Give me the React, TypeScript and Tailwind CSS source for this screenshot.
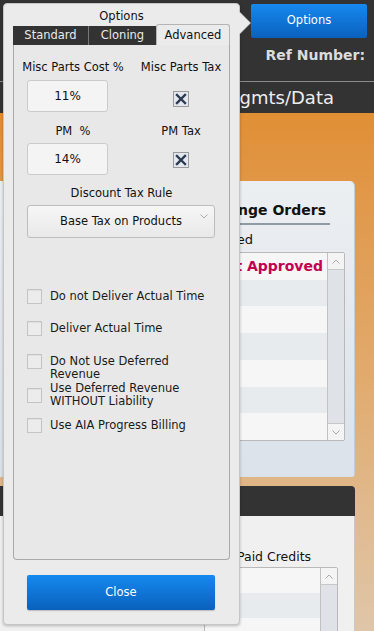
import React from "react";

const FONT = { fontFamily: '"DejaVu Sans", Verdana, sans-serif' };

function XBox() {
  return (
    <div className="w-[16px] h-[16px] border border-[#9a9a9a] bg-[#e4e8ee] flex items-center justify-center">
      <svg width="12" height="12" viewBox="0 0 12 12">
        <path d="M2 2 L10 10 M10 2 L2 10" stroke="#2b3a4f" strokeWidth="2.4" strokeLinecap="square" />
      </svg>
    </div>
  );
}

function CheckRow({ lines, className, center }: { lines: string[]; className?: string; center?: boolean }) {
  return (
    <div className={`flex ${center ? "items-center" : "items-start"} gap-[8px] ${className ?? ""}`}>
      <div className="w-[15px] h-[15px] shrink-0 border border-[#c4c4c4] bg-[#ececec] shadow-[inset_0_1px_1px_rgba(0,0,0,0.06)]" />
      <div className={`text-[11.5px] leading-[13px] text-[#1a1a1a] ${center ? "" : "mt-[1px]"}`}>
        {lines.map((l) => (
          <div key={l}>{l}</div>
        ))}
      </div>
    </div>
  );
}

function OptionsPopover() {
  return (
    <div className="absolute left-[3px] top-[3px] w-[237px] h-[622px] bg-[#ebebeb] border border-[#c6c6c6] rounded-[4px] shadow-[0_1px_3px_rgba(0,0,0,0.25)] flex flex-col">
      {/* arrow pointing at the Options button */}
      <div className="absolute right-[-12px] top-[7px] w-0 h-0 border-y-[12px] border-y-transparent border-l-[12px] border-l-[#c6c6c6]" />
      <div className="absolute right-[-11px] top-[7px] w-0 h-0 border-y-[12px] border-y-transparent border-l-[12px] border-l-[#ebebeb]" />

      <div className="h-[20px] pt-[5px] text-center text-[11.5px] leading-[14px] text-[#111]">Options</div>

      <div className="mx-[9px] flex items-end h-[21px]">
        <div className="w-[76px] h-[19px] bg-[#333] text-[#eaeaea] text-[11.5px] leading-[19px] text-center border-r border-[#777]">
          Standard
        </div>
        <div className="w-[67px] h-[19px] bg-[#333] text-[#eaeaea] text-[11.5px] leading-[19px] text-center">
          Cloning
        </div>
        <div className="flex-1 h-[21px] bg-[#ebebeb] border border-b-0 border-[#b4b4b4] rounded-t-[3px] text-[#111] text-[11.5px] leading-[20px] text-center">
          Advanced
        </div>
      </div>

      <div className="mx-[9px] h-[515px] bg-[#e8e8e8] border border-t-0 border-[#a9a9a9] rounded-b-[4px] pl-[8px] pt-[15px]">
        <div className="flex gap-[9px]">
          <div className="w-[102px]">
            <div className="text-center text-[11.5px] leading-[14px] text-[#111] whitespace-nowrap">Misc Parts Cost %</div>
            <div className="ml-[5px] mt-[6px] w-[81px] h-[32px] bg-[#f4f4f4] border border-[#cbcbcb] rounded-[3px] flex items-center justify-center text-[12px] text-[#111]">
              11%
            </div>
          </div>
          <div className="w-[96px] flex flex-col items-center">
            <div className="text-[11.5px] leading-[14px] text-[#111] whitespace-nowrap">Misc Parts Tax</div>
            <div className="mt-[17px]">
              <XBox />
            </div>
          </div>
        </div>

        <div className="flex gap-[9px] mt-[12px]">
          <div className="w-[102px]">
            <div className="text-center text-[11.5px] leading-[14px] text-[#111]">PM&nbsp; %</div>
            <div className="ml-[5px] mt-[5px] w-[81px] h-[32px] bg-[#f4f4f4] border border-[#cbcbcb] rounded-[3px] flex items-center justify-center text-[12px] text-[#111]">
              14%
            </div>
          </div>
          <div className="w-[96px] flex flex-col items-center">
            <div className="text-[11.5px] leading-[14px] text-[#111]">PM Tax</div>
            <div className="mt-[14px]">
              <XBox />
            </div>
          </div>
        </div>

        <div className="mt-[11px] pr-[8px] text-center text-[11.5px] leading-[14px] text-[#111]">Discount Tax Rule</div>
        <div className="relative ml-[5px] mt-[5px] w-[188px] h-[33px] bg-gradient-to-b from-[#f6f6f6] to-[#e9e9e9] border border-[#bdbdbd] rounded-[3px] flex items-center justify-center text-[11.5px] text-[#111]">
          Base Tax on Products
          <svg className="absolute right-[6px] top-[8px]" width="8" height="5" viewBox="0 0 8 5">
            <path d="M0.5 0.5 L4 4 L7.5 0.5" fill="none" stroke="#aaa" strokeWidth="1" />
          </svg>
        </div>

        <div className="ml-[5px] mt-[51px] flex flex-col">
          <CheckRow lines={["Do not Deliver Actual Time"]} />
          <CheckRow className="mt-[17px]" lines={["Deliver Actual Time"]} />
          <CheckRow className="mt-[18px]" lines={["Do Not Use Deferred", "Revenue"]} />
          <CheckRow center className="mt-[1px]" lines={["Use Deferred Revenue", "WITHOUT Liability"]} />
          <CheckRow className="mt-[10px]" lines={["Use AIA Progress Billing"]} />
        </div>
      </div>

      <div className="mt-[15px] ml-[23px] w-[188px] h-[35px] rounded-[2px] bg-gradient-to-b from-[#1689ef] to-[#0a61bd] shadow-[0_1px_1px_rgba(0,0,0,0.2)] flex items-center justify-center text-white text-[11.5px]">
        Close
      </div>
    </div>
  );
}

function ListRows({ rows, h, first }: { rows: number; h: number; first?: React.ReactNode }) {
  return (
    <div className="flex-1 min-w-0 flex flex-col">
      {Array.from({ length: rows }).map((_, i) => (
        <div
          key={i}
          style={{ height: h }}
          className={`${i % 2 === 0 ? "bg-[#f6f6f6]" : "bg-[#e8ebee]"} flex items-center justify-end pr-[4px] whitespace-nowrap`}
        >
          {i === 0 ? first : null}
        </div>
      ))}
    </div>
  );
}

function ScrollBar() {
  return (
    <div className="w-[17px] shrink-0 border-l border-[#c2c2c2] bg-[#dfe3e8] flex flex-col justify-between">
      <div className="h-[17px] bg-[#f4f4f4] border-b border-[#c8c8c8] flex items-center justify-center">
        <svg width="8" height="5" viewBox="0 0 8 5">
          <path d="M0.5 4.5 L4 1 L7.5 4.5" fill="none" stroke="#aaa" strokeWidth="1" />
        </svg>
      </div>
      <div className="h-[17px] bg-[#f4f4f4] border-t border-[#c8c8c8] flex items-center justify-center">
        <svg width="8" height="5" viewBox="0 0 8 5">
          <path d="M0.5 0.5 L4 4 L7.5 0.5" fill="none" stroke="#aaa" strokeWidth="1" />
        </svg>
      </div>
    </div>
  );
}

export default function App() {
  return (
    <div className="relative w-[374px] h-[631px] overflow-hidden bg-[#333]" style={FONT}>
      {/* page header */}
      <div className="h-[81px] bg-[#333] flex flex-col items-end pr-[7px]">
        <div className="mt-[4px] w-[116px] h-[34px] rounded-[2px] bg-gradient-to-b from-[#1689ef] to-[#0a61bd] flex items-center justify-center text-white text-[11.5px]">
          Options
        </div>
        <div className="mt-[7px] mr-[2px] text-[14px] font-bold text-[#dcdcdc]">Ref Number:</div>
      </div>
      <div className="h-[1px] bg-[#8a8a8a]" />
      <div className="h-[31px] bg-[#333] pl-[224px] flex items-center">
        <span className="text-[18px] leading-[20px] text-[#eeeeee]">Mgmts/Data</span>
      </div>

      {/* orange work area */}
      <div className="h-[518px] bg-gradient-to-b from-[#e08f34] via-[#e1aa6c] to-[#dfc6a8] pt-[68px] pr-[19px]">
        <div className="h-[296px] rounded-tr-[5px] rounded-br-[3px] bg-gradient-to-b from-[#eceff2] to-[#dbe2ea] border-r border-[#c5ccd6] pt-[19px] pl-[206px] pr-[9px]">
          <div className="w-[124px] border-b-2 border-[#8f9aa5] pb-[3px] pr-[4px] flex justify-end whitespace-nowrap text-[14px] font-bold leading-[20px] text-[#111]">
            Change Orders
          </div>
          <div className="mt-[6px] w-[47px] flex justify-end whitespace-nowrap text-[13px] leading-[18px] text-[#111]">
            Requested
          </div>
          <div className="mt-[3px] h-[189px] flex border border-[#b9b9b9] rounded-[2px] bg-[#f6f6f6]">
            <ListRows
              rows={7}
              h={27}
              first={<span className="text-[14px] font-bold text-[#c2004f]">Not Approved</span>}
            />
            <ScrollBar />
          </div>
        </div>

        <div className="mt-[9px] h-[30px] bg-[#333] rounded-tr-[4px]" />
        <div className="h-[200px] bg-[#f0f0f0] border-r border-[#c8c8c8] pl-[204px] pr-[16px] pt-[33px]">
          <div className="ml-[33px] text-[12.5px] leading-[16px] text-[#111] whitespace-nowrap">Paid Credits</div>
          <div className="mt-[2px] h-[120px] flex border border-[#b9b9b9] rounded-[2px] bg-[#f6f6f6]">
            <ListRows rows={4} h={25} />
            <ScrollBar />
          </div>
        </div>
      </div>

      <OptionsPopover />
    </div>
  );
}
